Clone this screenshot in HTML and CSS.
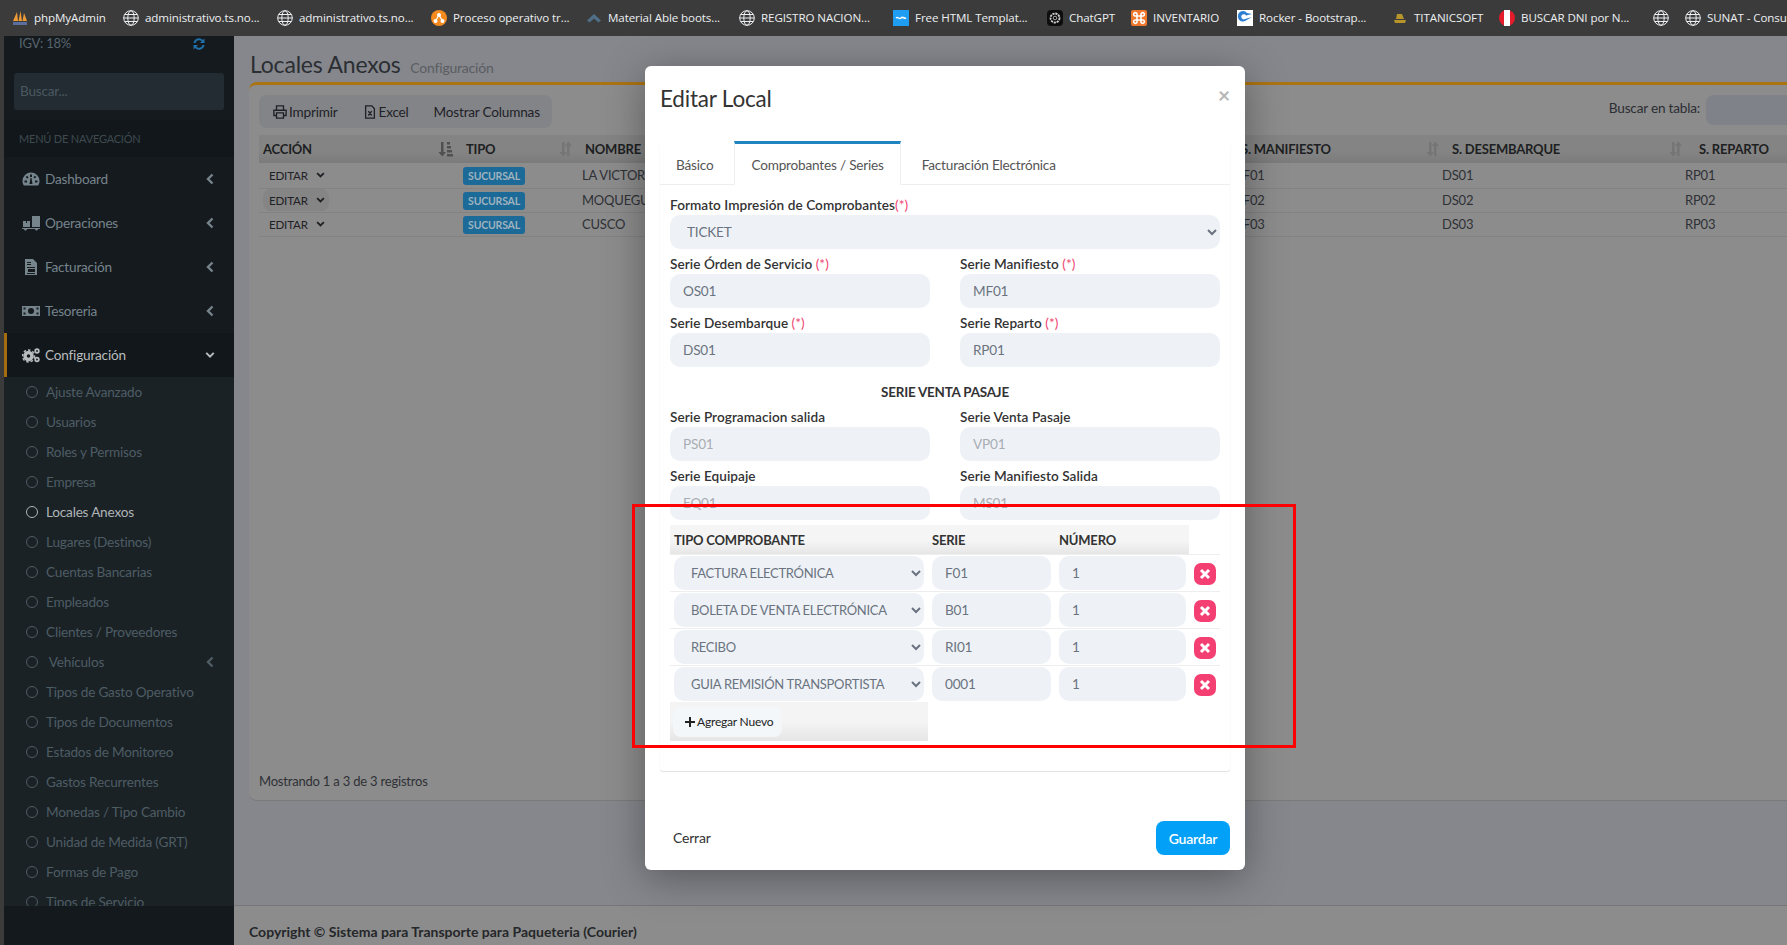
FILE: index.html
```html
<!DOCTYPE html>
<html lang="es">
  <head>
    <meta charset="UTF-8" />
    <title>Locales Anexos</title>
    <link rel="stylesheet" href="styles.css">
  </head>
  <body>
    <svg class="sprites" width="0" height="0">
      <symbol id="globe" viewBox="0 0 16 16"><g fill="none" stroke="currentColor" stroke-width="1"><circle cx="8" cy="8" r="7.300"/><ellipse cx="8" cy="8" rx="3.200" ry="7.300"/><path d="M.7 8h14.600M1.800 4.500h12.400M1.800 11.500h12.400"/></g></symbol>
      <symbol id="left" viewBox="0 0 10 12"><path d="M7.500 1.500 3 6l4.500 4.500" fill="none" stroke="currentColor" stroke-width="2.400"/></symbol>
      <symbol id="down" viewBox="0 0 12 10"><path d="M1.500 2.500 6 7l4.500-4.500" fill="none" stroke="currentColor" stroke-width="2.400"/></symbol>
      <symbol id="sort" viewBox="0 0 14 16"><path d="M3 1h2.500v10H8l-3.750 4.500L.5 11H3zM10.500 15H8V5H5.800L9.250.5 13 5h-2.500z" fill="currentColor"/></symbol>
      <symbol id="sort-on" viewBox="0 0 15 16"><path d="M3 1h2.500v10H8l-3.750 4.500L.5 11H3zM9 1h3v2.500H9zM9 5h4v2.500H9zM9 9h5v2.500H9zM9 13h6v2.500H9z" fill="currentColor"/></symbol>
      <symbol id="times" viewBox="0 0 12 12"><path d="M2 2l8 8M10 2l-8 8" fill="none" stroke="currentColor" stroke-width="3"/></symbol>
    </svg>

    <!-- Bookmarks -->
    <nav class="bookmarks">
      <a><svg class="bm-icon" viewBox="0 0 16 16"><path d="M1 11 5 2l1 9zM6.500 11 8.500 1l1.500 10zM10.500 11 12 3l3 8z" fill="#ee9a35"/><path d="M1 12h14v3H1z" fill="#5a6f9e"/></svg>phpMyAdmin</a>
      <a><svg class="bm-icon"><use href="#globe"/></svg>administrativo.ts.no...</a>
      <a><svg class="bm-icon"><use href="#globe"/></svg>administrativo.ts.no...</a>
      <a><svg class="bm-icon" viewBox="0 0 16 16"><circle cx="8" cy="8" r="8" fill="#f58a1f"/><path d="M8 5 4.500 11M8 5l3.500 6" stroke="#fff" stroke-width="1.200"/><circle cx="8" cy="5" r="2" fill="#fff"/><circle cx="4.500" cy="11" r="2" fill="#fff"/><circle cx="11.500" cy="11" r="2" fill="#fff"/></svg>Proceso operativo tr...</a>
      <a><svg class="bm-icon" viewBox="0 0 16 16"><path d="M1 10.500 8 4l7 6.500-2.500 2L8 8.500l-4.500 4z" fill="#4f6f88"/></svg>Material Able boots...</a>
      <a><svg class="bm-icon"><use href="#globe"/></svg>REGISTRO NACION...</a>
      <a><svg class="bm-icon" viewBox="0 0 16 16"><rect width="16" height="16" fill="#1f9df2"/><path d="M3 8c2-2 3 2 5 0s3 1 5 0" fill="none" stroke="#fff" stroke-width="1.500"/></svg>Free HTML Templat...</a>
      <a><svg class="bm-icon" viewBox="0 0 16 16"><rect width="16" height="16" rx="4" fill="#0d0d0d"/><circle cx="8" cy="8" r="4.500" fill="none" stroke="#cfcfcf" stroke-width="1.800" stroke-dasharray="2.200 .8"/><circle cx="8" cy="8" r="1.800" fill="none" stroke="#cfcfcf" stroke-width=".8"/></svg>ChatGPT</a>
      <a><svg class="bm-icon" viewBox="0 0 16 16"><rect width="16" height="16" rx="2" fill="#f0762b"/><path d="M6 6H4.500a1.700 1.700 0 1 1 1.500-1.700zM10 6h1.500A1.700 1.700 0 1 0 10 4.300zM6 10H4.500A1.700 1.700 0 1 0 6 11.700zM10 10h1.500a1.700 1.700 0 1 1-1.500 1.700zM6 6h4v4H6z" fill="none" stroke="#fff" stroke-width="1.600"/></svg>INVENTARIO</a>
      <a><svg class="bm-icon" viewBox="0 0 16 16"><rect width="16" height="16" fill="#fff"/><path d="M1 6a5 5 0 0 1 9-3l5 1-6 1.500a2.500 2.500 0 1 0-1 3.500L15 7l-6 3.500A5 5 0 0 1 1 6z" fill="#2d7fd3"/></svg>Rocker - Bootstrap...</a>
      <a><svg class="bm-icon" viewBox="0 0 16 16"><path d="M5 4h5l2 5H4zM2 10h12l-1 3H3z" fill="#b8952a"/></svg>TITANICSOFT</a>
      <a><svg class="bm-icon" viewBox="0 0 16 16"><circle cx="8" cy="8" r="8" fill="#e21c2b"/><rect x="5" width="6" height="16" fill="#fff"/></svg>BUSCAR DNI por N...</a>
      <a><svg class="bm-icon"><use href="#globe"/></svg></a>
      <a><svg class="bm-icon"><use href="#globe"/></svg>SUNAT - Consulta</a>
    </nav>

    <div class="app">
      <!-- Sidebar -->
      <aside class="sidebar">
        <div class="igv">
          <span>IGV: 18%</span>
          <svg class="refresh" viewBox="0 0 16 16"><path d="M2.500 7a5.500 5.500 0 0 1 9.500-3l1.500-1.500V7H9l1.700-1.700A3.700 3.700 0 0 0 4.500 7zM13.500 9A5.500 5.500 0 0 1 4 12l-1.500 1.500V9H7l-1.700 1.700A3.700 3.700 0 0 0 11.500 9z" fill="currentColor"/></svg>
        </div>
        <div class="side-search">Buscar...</div>
        <div class="side-header">MENÚ DE NAVEGACIÓN</div>
        <ul class="side-menu">
          <li class="menu-item">
            <svg class="menu-icon" viewBox="0 0 18 16"><path d="M9 1.500a8.500 8.500 0 0 0-8.500 8.500c0 1.800.5 3.300 1.400 4.500h14.200c.9-1.200 1.400-2.700 1.400-4.500A8.500 8.500 0 0 0 9 1.500zM8 3.500h2v2.500H8zM3.800 5.800l1.500-1 1.200 2-1.500 1zM12.700 4.800l1.500 1-1.200 1.800-1.500-1zM2.500 9.500h2.500v2H2.500zM13 9.500h2.500v2H13zM7.500 13l1-6h1l1 6z" fill="currentColor" fill-rule="evenodd"/></svg>
            <span class="menu-text">Dashboard</span>
            <svg class="menu-arrow"><use href="#left"/></svg>
          </li>
          <li class="menu-item">
            <svg class="menu-icon" viewBox="0 0 18 16"><path d="M10 1h8v11h-8zM1 6h3v2h1V6h3v6H1zM0 13h18v1h-2a1.500 1.500 0 0 1-3 0H5a1.500 1.500 0 0 1-3 0H0z" fill="currentColor"/></svg>
            <span class="menu-text">Operaciones</span>
            <svg class="menu-arrow"><use href="#left"/></svg>
          </li>
          <li class="menu-item">
            <svg class="menu-icon" viewBox="0 0 18 16"><path d="M3 0h8l4 4v12H3zM5 3h4v1H5zM5 5h4v1H5zM5 8h8v1H5zM6 10h7v3H6zM5 14h8v1H5z" fill="currentColor" fill-rule="evenodd"/></svg>
            <span class="menu-text">Facturación</span>
            <svg class="menu-arrow"><use href="#left"/></svg>
          </li>
          <li class="menu-item">
            <svg class="menu-icon" viewBox="0 0 18 16"><path d="M0 3h18v10H0zm9 2a3 3 0 1 0 0 6 3 3 0 0 0 0-6zM1.500 4.500v2h2v-2zm13 0v2h2v-2zm-13 5v2h2v-2zm13 0v2h2v-2z" fill="currentColor" fill-rule="evenodd"/></svg>
            <span class="menu-text">Tesoreria</span>
            <svg class="menu-arrow"><use href="#left"/></svg>
          </li>
          <li class="menu-item active">
            <svg class="menu-icon" viewBox="0 0 18 16"><circle cx="6.500" cy="9" r="3.500" fill="none" stroke="currentColor" stroke-width="3.500"/><circle cx="6.500" cy="9" r="6" fill="none" stroke="currentColor" stroke-width="1.500" stroke-dasharray="2.500 2"/><circle cx="15" cy="4" r="1.800" fill="none" stroke="currentColor" stroke-width="1.800"/><circle cx="15" cy="12.500" r="1.800" fill="none" stroke="currentColor" stroke-width="1.800"/></svg>
            <span class="menu-text">Configuración</span>
            <svg class="menu-arrow"><use href="#down"/></svg>
          </li>
        </ul>
        <ul class="side-sub">
          <li><i class="dot"></i>Ajuste Avanzado</li>
          <li><i class="dot"></i>Usuarios</li>
          <li><i class="dot"></i>Roles y Permisos</li>
          <li><i class="dot"></i>Empresa</li>
          <li class="current"><i class="dot"></i>Locales Anexos</li>
          <li><i class="dot"></i>Lugares (Destinos)</li>
          <li><i class="dot"></i>Cuentas Bancarias</li>
          <li><i class="dot"></i>Empleados</li>
          <li><i class="dot"></i>Clientes / Proveedores</li>
          <li><i class="dot"></i>&nbsp;Vehículos<svg class="menu-arrow"><use href="#left"/></svg></li>
          <li><i class="dot"></i>Tipos de Gasto Operativo</li>
          <li><i class="dot"></i>Tipos de Documentos</li>
          <li><i class="dot"></i>Estados de Monitoreo</li>
          <li><i class="dot"></i>Gastos Recurrentes</li>
          <li><i class="dot"></i>Monedas / Tipo Cambio</li>
          <li><i class="dot"></i>Unidad de Medida (GRT)</li>
          <li><i class="dot"></i>Formas de Pago</li>
          <li><i class="dot"></i>Tipos de Servicio</li>
        </ul>
        <div class="side-foot"></div>
      </aside>

      <!-- Page -->
      <main class="page">
        <h1 class="page-title">Locales Anexos <small>Configuración</small></h1>
        <section class="box">
          <div class="box-tools">
            <div class="dt-buttons">
              <span class="dt-btn">
                <svg class="dt-icon" viewBox="0 0 16 16"><path d="M4 6V1h8v5M4 12H1V6h14v6h-3M4 9h8v6H4z" fill="none" stroke="currentColor" stroke-width="1.500"/></svg>Imprimir
              </span>
              <span class="dt-btn">
                <svg class="dt-icon" viewBox="0 0 16 16"><path d="M3 1h7l3 3v11H3zM6 7l4 5M10 7l-4 5" fill="none" stroke="currentColor" stroke-width="1.500"/></svg>Excel
              </span>
              <span class="dt-btn">Mostrar Columnas</span>
            </div>
            <label class="dt-search">Buscar en tabla: <span class="dt-input"></span></label>
          </div>
          <table class="data-table">
            <colgroup>
              <col class="c-accion" /><col class="c-tipo" /><col class="c-nombre" />
              <col class="c-serie" /><col class="c-serie2" /><col class="c-serie3" />
            </colgroup>
            <thead>
              <tr>
                <th>ACCIÓN<svg class="sort on"><use href="#sort-on"/></svg></th>
                <th>TIPO<svg class="sort"><use href="#sort"/></svg></th>
                <th>NOMBRE</th>
                <th class="wide">S. MANIFIESTO<svg class="sort"><use href="#sort"/></svg></th>
                <th class="wide">S. DESEMBARQUE<svg class="sort"><use href="#sort"/></svg></th>
                <th class="wide">S. REPARTO</th>
              </tr>
            </thead>
            <tbody>
              <tr>
                <td><span class="row-btn">EDITAR<svg class="row-arrow"><use href="#down"/></svg></span></td>
                <td><span class="badge">SUCURSAL</span></td>
                <td class="cell-name">LA VICTORIA</td><td>MF01</td><td>DS01</td><td>RP01</td>
              </tr>
              <tr>
                <td><span class="row-btn hover">EDITAR<svg class="row-arrow"><use href="#down"/></svg></span></td>
                <td><span class="badge">SUCURSAL</span></td>
                <td class="cell-name">MOQUEGUA</td><td>MF02</td><td>DS02</td><td>RP02</td>
              </tr>
              <tr>
                <td><span class="row-btn">EDITAR<svg class="row-arrow"><use href="#down"/></svg></span></td>
                <td><span class="badge">SUCURSAL</span></td>
                <td class="cell-name">CUSCO</td><td>MF03</td><td>DS03</td><td>RP03</td>
              </tr>
            </tbody>
          </table>
          <div class="dt-info">Mostrando 1 a 3 de 3 registros</div>
        </section>
        <footer class="page-foot">Copyright © Sistema para Transporte para Paqueteria (Courier)</footer>
      </main>
    </div>

    <!-- Modal -->
    <div class="modal">
      <header class="modal-head">
        <h2>Editar Local</h2>
        <span class="modal-close">×</span>
      </header>
      <div class="tab-card">
        <ul class="tabs">
          <li>Básico</li>
          <li class="active">Comprobantes / Series</li>
          <li>Facturación Electrónica</li>
        </ul>
        <div class="tab-body">
          <div class="field">
            <label>Formato Impresión de Comprobantes<em>(*)</em></label>
            <select class="ctl ctl-select"><option>TICKET</option></select>
          </div>
          <div class="field-row">
            <div class="field">
              <label>Serie Órden de Servicio <em>(*)</em></label>
              <input class="ctl" value="OS01" />
            </div>
            <div class="field">
              <label>Serie Manifiesto <em>(*)</em></label>
              <input class="ctl" value="MF01" />
            </div>
          </div>
          <div class="field-row">
            <div class="field">
              <label>Serie Desembarque <em>(*)</em></label>
              <input class="ctl" value="DS01" />
            </div>
            <div class="field">
              <label>Serie Reparto <em>(*)</em></label>
              <input class="ctl" value="RP01" />
            </div>
          </div>
          <h3 class="sec-title">SERIE VENTA PASAJE</h3>
          <div class="field-row">
            <div class="field">
              <label>Serie Programacion salida</label>
              <input class="ctl" value="PS01" disabled />
            </div>
            <div class="field">
              <label>Serie Venta Pasaje</label>
              <input class="ctl" value="VP01" disabled />
            </div>
          </div>
          <div class="field-row">
            <div class="field">
              <label>Serie Equipaje</label>
              <input class="ctl" value="EQ01" disabled />
            </div>
            <div class="field">
              <label>Serie Manifiesto Salida</label>
              <input class="ctl" value="MS01" disabled />
            </div>
          </div>
          <table class="serie-table">
            <colgroup>
              <col class="s-tipo" /><col class="s-serie" /><col class="s-num" /><col class="s-del" />
            </colgroup>
            <thead>
              <tr><th>TIPO COMPROBANTE</th><th>SERIE</th><th>NÚMERO</th><th class="blank"></th></tr>
            </thead>
            <tbody>
              <tr>
                <td><select class="ctl ctl-select row-select"><option>FACTURA ELECTRÓNICA</option></select></td>
                <td><input class="ctl" value="F01" /></td>
                <td><input class="ctl" value="1" /></td>
                <td><span class="del-btn"><svg class="del-x"><use href="#times"/></svg></span></td>
              </tr>
              <tr>
                <td><select class="ctl ctl-select row-select"><option>BOLETA DE VENTA ELECTRÓNICA</option></select></td>
                <td><input class="ctl" value="B01" /></td>
                <td><input class="ctl" value="1" /></td>
                <td><span class="del-btn"><svg class="del-x"><use href="#times"/></svg></span></td>
              </tr>
              <tr>
                <td><select class="ctl ctl-select row-select"><option>RECIBO</option></select></td>
                <td><input class="ctl" value="RI01" /></td>
                <td><input class="ctl" value="1" /></td>
                <td><span class="del-btn"><svg class="del-x"><use href="#times"/></svg></span></td>
              </tr>
              <tr>
                <td><select class="ctl ctl-select row-select"><option>GUIA REMISIÓN TRANSPORTISTA</option></select></td>
                <td><input class="ctl" value="0001" /></td>
                <td><input class="ctl" value="1" /></td>
                <td><span class="del-btn"><svg class="del-x"><use href="#times"/></svg></span></td>
              </tr>
            </tbody>
            <tfoot>
              <tr>
                <td class="add-cell">
                  <button class="add-btn"><svg class="add-plus" viewBox="0 0 10 10"><path d="M5 0v10M0 5h10" stroke="currentColor" stroke-width="2"/></svg>Agregar Nuevo</button>
                </td>
              </tr>
            </tfoot>
          </table>
        </div>
      </div>
      <footer class="modal-foot">
        <button class="btn-close">Cerrar</button>
        <button class="btn-save">Guardar</button>
      </footer>
    </div>

    <!-- Red annotation over the screenshot -->
    <div class="red-box"></div>
  </body>
</html>
```

FILE: styles.css
```css
/* Basic Reset & Global Styles */
* {
  margin: 0;
  padding: 0;
  box-sizing: border-box;
}
html,
body {
  width: 1787px;
  height: 945px;
  overflow: hidden;
}
body {
  display: flex;
  flex-direction: column;
  position: relative;
  background-color: #3b3b3b;
  color: #333;
  font-family: "Lato", "Noto Sans", sans-serif;
  font-size: 13.6px;
  letter-spacing: -0.2px;
}
ul {
  list-style: none;
}
.sprites {
  position: absolute;
}

/* Bookmarks */
.bookmarks {
  flex: none;
  height: 35px;
  margin-bottom: 1px;
  padding-left: 12px;
  display: grid;
  grid-template-columns: 111px 154px 154px 155px 153px 154px 154px 84px 106px 155px 107px 154px 32px 110px;
  align-items: center;
  background-color: #3b3b3b;
  color: #eceff1;
  font-family: "Open Sans", sans-serif;
  font-size: 11.6px;
  letter-spacing: -0.1px;
  overflow: hidden;
}
.bookmarks a {
  display: flex;
  align-items: center;
  gap: 6px;
  white-space: nowrap;
}
.bm-icon {
  width: 16px;
  height: 16px;
  flex: none;
}

/* App frame */
.app {
  flex: 1;
  display: flex;
  min-height: 0;
  padding-left: 4px;
}

/* Sidebar */
.sidebar {
  flex: none;
  width: 230px;
  display: flex;
  flex-direction: column;
  background-color: #151a1f;
  color: #76848c;
}
.igv {
  height: 37px;
  padding: 0 15px;
  display: flex;
  justify-content: space-between;
  font-size: 13px;
  line-height: 15px;
  color: #57646c;
}
.refresh {
  width: 16px;
  height: 16px;
  margin-right: 12px;
  color: #1f6fa8;
}
.side-search {
  height: 37px;
  margin: 0 10px;
  padding: 0 6px;
  border-radius: 3px;
  background-color: #232c32;
  color: #4a5860;
  line-height: 37px;
}
.side-header {
  height: 37px;
  margin-top: 10px;
  padding-left: 15px;
  background-color: #11171a;
  color: #3f4a50;
  font-size: 11px;
  line-height: 37px;
}
.menu-item {
  height: 44px;
  padding: 0 0 1px 18px;
  display: flex;
  align-items: center;
  position: relative;
}
.menu-item.active {
  padding-left: 15px;
  border-left: 3px solid #a56c0f;
  background-color: #11171a;
  color: #b8bcbf;
}
.menu-icon {
  width: 18px;
  height: 16px;
  margin-right: 5px;
  flex: none;
}
.menu-text {
  flex: 1;
}
.menu-arrow {
  width: 10px;
  height: 12px;
  margin-right: 19px;
  flex: none;
}
.side-sub {
  flex: 1;
  min-height: 0;
  overflow: hidden;
  background-color: #1a2226;
  color: #4e5c64;
}
.side-sub li {
  height: 30px;
  padding: 0 0 1px 22px;
  display: flex;
  align-items: center;
}
.side-sub .menu-arrow {
  margin-left: auto;
}
.side-sub .current {
  color: #b0b4b7;
}
.dot {
  width: 12px;
  height: 12px;
  margin-right: 8px;
  border: 1.5px solid currentColor;
  border-radius: 50%;
  flex: none;
}
.side-foot {
  height: 39px;
  flex: none;
  background-color: #14191d;
}

/* Page */
.page {
  flex: 1;
  min-width: 0;
  display: flex;
  flex-direction: column;
  overflow: hidden;
  background-color: #85878c;
}
.page-title {
  height: 46px;
  padding: 13px 0 0 16px;
  color: #2b2e33;
  font-size: 23px;
  font-weight: 400;
  line-height: 30px;
  white-space: nowrap;
}
.page-title small {
  margin-left: 4px;
  color: #5b5d62;
  font-size: 14px;
}
.box {
  width: 1700px;
  height: 719px;
  margin-left: 15px;
  padding: 10px 10px 0;
  flex: none;
  display: flex;
  flex-direction: column;
  border-top: 3px solid #ac7312;
  border-top-left-radius: 8px;
  border-bottom-left-radius: 8px;
  border-bottom: 1px solid #7a7a7a;
  background-color: #8c8c8c;
}
.box-tools {
  width: 1537px;
  height: 33px;
  flex: none;
  display: flex;
  justify-content: space-between;
}
.dt-buttons {
  width: 293px;
  padding-left: 14px;
  display: flex;
  align-items: center;
  gap: 25px;
  border-radius: 8px;
  background-color: #828488;
  color: #1f2126;
}
.dt-btn {
  display: flex;
  align-items: center;
  gap: 2px;
}
.dt-icon {
  width: 14px;
  height: 16px;
}
.dt-search {
  display: flex;
  align-items: flex-start;
  gap: 6px;
  color: #2b2e33;
  line-height: 26px;
  white-space: nowrap;
}
.dt-input {
  width: 90px;
  height: 30px;
  border-radius: 8px;
  background-color: #7f8289;
}
.data-table {
  width: 1621px;
  margin-top: 7px;
  table-layout: fixed;
  border-collapse: collapse;
}
.c-accion { width: 203px; }
.c-tipo { width: 119px; }
.c-nombre { width: 646px; }
.c-serie { width: 211px; }
.c-serie2 { width: 243px; }
.c-serie3 { width: 199px; }
.data-table th {
  height: 28px;
  padding-left: 4px;
  background: linear-gradient(#848484 60%, #7b7b7b);
  color: #1d1f22;
  font-size: 13px;
  text-align: left;
  white-space: nowrap;
}
.data-table th.wide {
  padding-left: 14px;
}
.data-table th.wide:last-child {
  padding-left: 18px;
}
.sort {
  float: right;
  width: 14px;
  height: 16px;
  margin-right: 8px;
  color: #757575;
}
.data-table th.wide .sort {
  margin-right: -2px;
}
.sort.on {
  width: 15px;
  margin-right: 9px;
  color: #505050;
}
.data-table td {
  height: 24px;
  padding-left: 4px;
  border-bottom: 1px solid #828282;
  color: #2f3136;
  font-size: 13px;
}
.data-table td.cell-name {
  padding-left: 1px;
}
.data-table tbody tr:first-child td {
  height: 25px;
}
.row-btn {
  width: 66px;
  height: 22px;
  padding-left: 6px;
  display: flex;
  align-items: center;
  gap: 8px;
  border-radius: 8px;
  color: #1f2126;
  font-size: 11.6px;
}
.row-btn.hover {
  background-color: #858585;
}
.row-arrow {
  width: 9px;
  height: 8px;
}
.badge {
  width: 62px;
  height: 18px;
  margin: 2px 0 0 -3px;
  display: block;
  border-radius: 3px;
  background-color: #1b6a97;
  color: #9fb2bf;
  font-size: 10.5px;
  font-weight: 700;
  line-height: 18px;
  text-align: center;
}
.dt-info {
  margin-top: auto;
  margin-bottom: 11px;
  color: #2f3136;
  font-size: 13px;
}
.page-foot {
  height: 40px;
  margin-top: auto;
  padding-left: 15px;
  border-top: 1px solid #75767a;
  background-color: #8c8c8c;
  color: #25272a;
  font-size: 14px;
  font-weight: 700;
  letter-spacing: 0;
  line-height: 51px;
}

/* Modal */
.modal {
  position: absolute;
  top: 66px;
  left: 645px;
  width: 600px;
  height: 804px;
  padding: 0 15px 15px;
  display: flex;
  flex-direction: column;
  border-radius: 6px;
  background-color: #fff;
  box-shadow: 0 8px 40px rgba(0, 0, 0, 0.35);
}
.modal-head {
  height: 75px;
  flex: none;
  display: flex;
  justify-content: space-between;
}
.modal-head h2 {
  margin-top: 16px;
  color: #333;
  font-size: 22.5px;
  font-weight: 400;
  line-height: 33px;
}
.modal-close {
  margin-top: 16px;
  color: #b5b5b5;
  font-size: 21px;
  font-weight: 700;
  line-height: 26px;
}
.tab-card {
  height: 630px;
  flex: none;
  border-radius: 3px;
  box-shadow: 0 1px 1px rgba(0, 0, 0, 0.12), 0 0 1px rgba(0, 0, 0, 0.05);
}
.tabs {
  height: 44px;
  display: flex;
  border-bottom: 1px solid #eee;
  color: #555;
}
.tabs li {
  height: 43px;
  margin-right: 5px;
  padding: 3px 16px 0;
  line-height: 42px;
}
.tabs li.active {
  height: 44px;
  margin-right: 5px;
  border-top: 3px solid #1f84c0;
  border-left: 1px solid #eee;
  border-right: 1px solid #eee;
  border-bottom: 1px solid #fff;
  background-color: #fff;
  padding-top: 0;
}
.tab-body {
  padding: 5px 10px 0;
}
.field label {
  display: block;
  height: 20px;
  margin-top: 5px;
  color: #333;
  font-weight: 600;
  letter-spacing: 0.05px;
  line-height: 20px;
}
.field em {
  color: #f0436f;
  font-style: normal;
  font-weight: 400;
}
.field-row {
  display: grid;
  grid-template-columns: 260px 260px;
  column-gap: 30px;
}
.ctl {
  display: block;
  width: 100%;
  height: 34px;
  padding: 0 13px;
  border: none;
  border-radius: 10px;
  background-color: #eef2f6;
  color: #6b7280;
  font-family: inherit;
  font-size: 13.6px;
  letter-spacing: -0.2px;
}
.ctl:disabled {
  color: #a8adb3;
}
.ctl-select {
  padding-left: 13px;
}
.row-select {
  padding-left: 13px;
  font-size: 13px;
  letter-spacing: -0.3px;
}
.sec-title {
  height: 35px;
  padding-top: 15px;
  color: #333;
  font-size: 13.4px;
  font-weight: 700;
  line-height: 20px;
  text-align: center;
}

/* Serie table */
.serie-table {
  width: 550px;
  margin-top: 5px;
  table-layout: fixed;
  border-collapse: separate;
  border-spacing: 0;
}
.s-tipo { width: 258px; }
.s-serie { width: 127px; }
.s-num { width: 134px; }
.s-del { width: 31px; }
.serie-table th {
  height: 29px;
  padding: 0 4px;
  background: linear-gradient(#f5f5f5 55%, #e6e6e6);
  color: #333;
  font-size: 13px;
  font-weight: 700;
  text-align: left;
}
.serie-table th.blank {
  background: none;
}
.serie-table tbody td {
  padding: 1px 4px;
  border-top: 1px solid #eee;
}
.serie-table tbody td:nth-child(3) {
  padding-right: 3px;
}
.serie-table tbody td:last-child {
  padding: 1px 4px 0 5px;
}
.del-btn {
  width: 22px;
  height: 22px;
  display: flex;
  align-items: center;
  justify-content: center;
  border-radius: 7px;
  background-color: #f43f72;
  color: #fff;
}
.del-x {
  width: 12px;
  height: 12px;
}
.add-cell {
  height: 39px;
  padding: 0 0 0 3px;
  background: linear-gradient(#f4f4f4 50%, #e6e6e6);
}
.add-btn {
  width: 109px;
  height: 30px;
  padding-left: 12px;
  display: flex;
  align-items: center;
  gap: 2px;
  border: none;
  border-radius: 8px;
  background-color: #f3f7fa;
  color: #222;
  font-family: inherit;
  font-size: 12px;
  letter-spacing: -0.2px;
}
.add-plus {
  width: 10px;
  height: 10px;
}

/* Modal footer */
.modal-foot {
  margin-top: auto;
  display: flex;
  align-items: center;
  justify-content: space-between;
}
.btn-close {
  padding: 0 0 2px 13px;
  border: none;
  background: none;
  color: #333;
  font-family: inherit;
  font-size: 14px;
  letter-spacing: -0.2px;
}
.btn-save {
  width: 74px;
  height: 34px;
  border: none;
  border-radius: 8px;
  background-color: #03a0f8;
  color: #fff;
  font-family: inherit;
  font-size: 14px;
  font-weight: 600;
  letter-spacing: -0.2px;
}

/* Red annotation */
.red-box {
  position: absolute;
  top: 504px;
  left: 632px;
  width: 664px;
  height: 244px;
  border: 3px solid #f00;
}
```
